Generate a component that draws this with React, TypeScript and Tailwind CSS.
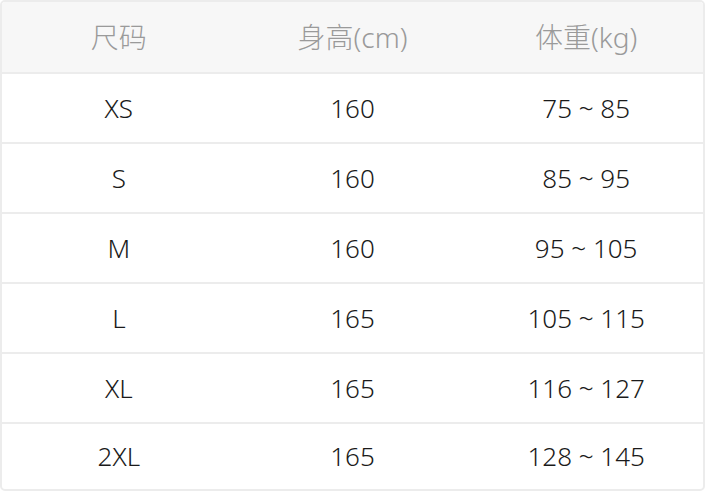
const rows = [
  { size: "XS", height: "160", weight: "75 ~ 85" },
  { size: "S", height: "160", weight: "85 ~ 95" },
  { size: "M", height: "160", weight: "95 ~ 105" },
  { size: "L", height: "165", weight: "105 ~ 115" },
  { size: "XL", height: "165", weight: "116 ~ 127" },
  { size: "2XL", height: "165", weight: "128 ~ 145" },
];

export default function App() {
  return (
    <div className="bg-white w-[706px] h-[492px] font-['Noto_Sans','Noto_Sans_CJK_SC',sans-serif]">
      <div className="w-[705px] h-[491px] border-2 border-[#ececec] rounded-[5px] overflow-hidden flex flex-col">
        <div className="grid grid-cols-3 h-[70px] shrink-0 bg-[#f7f7f7] text-[#9a9a9a] text-[28px] font-light items-center text-center">
          <div>尺码</div>
          <div>身高(cm)</div>
          <div>体重(kg)</div>
        </div>
        {rows.map((r, i) => (
          <div
            key={r.size}
            className={
              i === rows.length - 1
                ? "grid grid-cols-3 flex-1 border-t-2 border-[#ececec] text-[#1a1a1a] text-[26px] font-light items-center text-center"
                : "grid grid-cols-3 h-[70px] shrink-0 border-t-2 border-[#ececec] text-[#1a1a1a] text-[26px] font-light items-center text-center"
            }
          >
            <div>{r.size}</div>
            <div>{r.height}</div>
            <div>{r.weight}</div>
          </div>
        ))}
      </div>
    </div>
  );
}
